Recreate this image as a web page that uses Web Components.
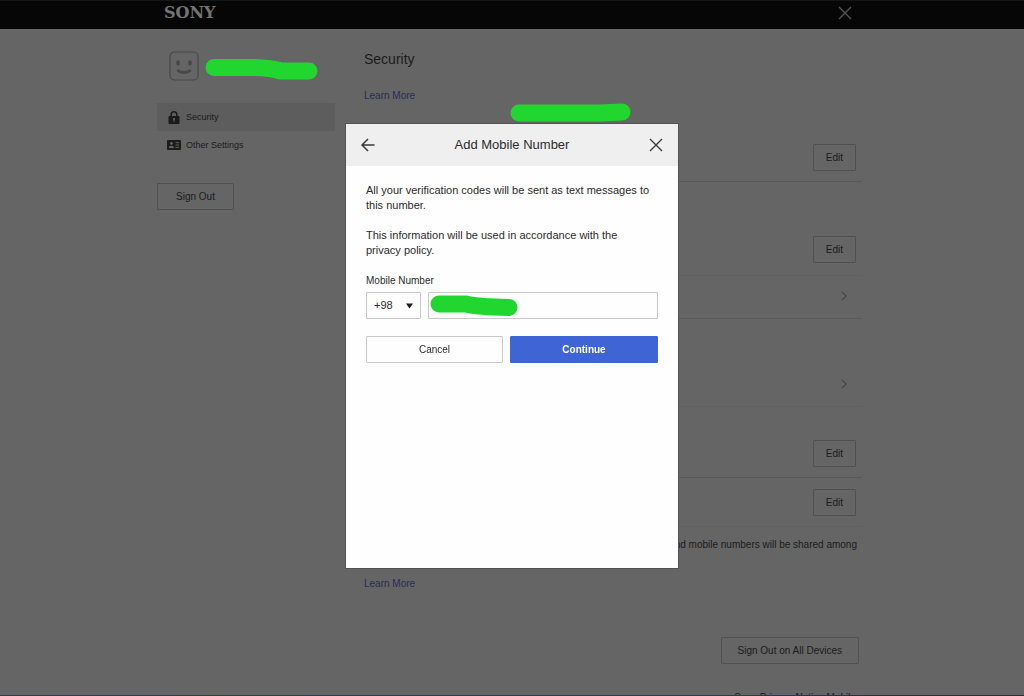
<!DOCTYPE html>
<html lang="en">
<head>
<meta charset="utf-8">
<meta name="viewport" content="width=device-width, initial-scale=1">
<title>Security - Account Management</title>
<style>
  html, body { margin: 0; height: 100%; }
  body {
    overflow: hidden;
    background: #656565;
    color: #1b1b1b;
    font: 10px/15px "Liberation Sans", Arial, sans-serif;
    --line: #5a5a5a;
    --outline: #505050;
    --mark: #20d62f;
  }
</style>
</head>
<body>
<account-page></account-page>
<script>
const define = (name, html, setup) => {
  const template = document.createElement('template');
  template.innerHTML = html;
  customElements.define(name, class extends HTMLElement {
    constructor() {
      super();
      this.attachShadow({ mode: 'open' }).append(template.content.cloneNode(true));
    }
    connectedCallback() { if (setup) setup(this, this.shadowRoot); }
  });
};

define('icon-glyph', `
  <style>
    :host { display: inline-flex; flex: none; }
    svg { display: block; fill: none; stroke: currentColor; }
  </style>`, (host, root) => {
  const shapes = {
    close: [14, 14, '<path d="M1 1 13 13M13 1 1 13" stroke-width="1.4"/>'],
    back: [14, 14, '<path d="M13.5 7H1.5M7 1 1 7l6 6" stroke-width="1.5"/>'],
    chevron: [6, 10, '<path d="M.7.7 5 5 .7 9.3" stroke-width="1.2"/>'],
    lock: [14, 13, '<path d="M4.2 6V3.6a2.8 2.8 0 0 1 5.6 0V6" stroke-width="1.6"/><rect x="1.500" y="5" width="11" height="8" rx="1" fill="currentColor" stroke="none"/><circle cx="7" cy="8" r="1.1" fill="#656565" stroke="none"/><path d="M7 8v3" stroke="#656565" stroke-width="1"/>'],
    card: [14, 10, '<rect width="14" height="10" rx="1" fill="currentColor" stroke="none"/><circle cx="4.4" cy="3.4" r="1.4" fill="#656565" stroke="none"/><path d="M1.8 8c0-3 5.2-3 5.2 0z" fill="#656565" stroke="none"/><path d="M8.5 2.7H12M8.5 5H12M8.5 7.3H12" stroke="#656565" stroke-width="1"/>'],
    face: [30, 30, '<rect x="1" y="1" width="28" height="28" rx="4.5" stroke-width="1.2"/><ellipse cx="9" cy="12" rx="1.9" ry="2.7" fill="currentColor" stroke="none"/><ellipse cx="21" cy="12" rx="1.9" ry="2.7" fill="currentColor" stroke="none"/><path d="M9.300 19.800q5.800 3.600 11.400 0" stroke-width="3" stroke-linecap="round"/>']
  };
  const [w, h, body] = shapes[host.getAttribute('name')];
  root.innerHTML += `<svg width="${w}" height="${h}" viewBox="0 0 ${w} ${h}" aria-hidden="true">${body}</svg>`;
});

define('marker-stroke', `
  <style>
    :host { display: block; flex: none; }
    svg { display: block; fill: none; stroke: var(--mark); stroke-width: 17; stroke-linecap: round; stroke-linejoin: round; }
  </style>`, (host, root) => {
  const w = host.getAttribute('width');
  const h = host.getAttribute('height') || 22;
  root.innerHTML += `<svg width="${w}" height="${h}" viewBox="0 0 ${w} ${h}" aria-hidden="true"><path d="${host.getAttribute('path')}"/></svg>`;
});

define('line-button', `
  <style>
    :host { display: inline-flex; }
    button {
      flex: 1; height: 27px; padding: 0 var(--pad, 12px);
      border: 1px solid var(--outline); border-radius: 1px;
      background: none; color: inherit; font: inherit; white-space: nowrap;
    }
    :host([primary]) button { background: #3e64d6; border-color: #3e64d6; color: #fff; font-weight: bold; }
  </style>
  <button type="button"><slot></slot></button>`);

define('top-bar', `
  <style>
    :host { display: block; background: #060606; border-top: 1px solid #151515; }
    .inner { display: flex; justify-content: space-between; align-items: center; max-width: 710px; height: 24px; padding-bottom: 4px; margin: 0 auto; }
    a { margin-left: 7px; color: #747474; font: bold 16px/20px "DejaVu Serif", serif; text-decoration: none; }
    button { display: flex; margin-right: 15px; padding: 0; border: 0; background: none; color: #555; }
  </style>
  <div class="inner">
    <a href="#">SONY</a>
    <button type="button" aria-label="Close"><icon-glyph name="close"></icon-glyph></button>
  </div>`);

define('side-link', `
  <style>
    :host { display: block; font-size: 9px; }
    a { display: flex; align-items: center; gap: 5px; height: 28px; padding-left: 10px; color: inherit; text-decoration: none; }
    :host([current]) a { background: #5d5d5d; }
  </style>
  <a href="#"><slot name="icon"></slot><slot></slot></a>`);

define('side-menu', `
  <style>
    :host { display: block; }
    .user { display: flex; align-items: center; gap: 6px; padding: 1px 0 22px 12px; color: #484848; }
    nav { margin-bottom: 24px; }
    line-button { --pad: 18px; }
  </style>
  <div class="user">
    <icon-glyph name="face"></icon-glyph>
    <marker-stroke width="114" height="30" path="M9 16.500H50Q66 17 76 20H104"></marker-stroke>
  </div>
  <nav aria-label="Account">
    <side-link current><icon-glyph slot="icon" name="lock"></icon-glyph>Security</side-link>
    <side-link><icon-glyph slot="icon" name="card"></icon-glyph>Other Settings</side-link>
  </nav>
  <line-button>Sign Out</line-button>`);

define('setting-row', `
  <style>
    :host { display: flex; justify-content: flex-end; align-items: flex-end; box-sizing: border-box; padding: 0 6px 10px 0; border-bottom: 1px solid var(--line); }
    :host([link]) { padding: 0 15px 17px 0; color: #474747; }
    :host([faint]) { border-color: #616161; }
    :host([size="s"]) { height: 43px; }
    :host([size="m"]) { height: 49px; }
    :host([size="ml"]) { height: 57px; }
    :host([size="l"]) { height: 71px; }
    :host([size="xl"]) { height: 94px; padding-bottom: 12px; }
    :host([size="link-l"]) { height: 88px; }
  </style>
  <slot></slot>`);

define('security-panel', `
  <style>
    :host { display: block; padding-right: 5px; }
    h1 { margin: 0; font-size: 14px; line-height: 18px; font-weight: normal; }
    a { color: #2b2b58; text-decoration: none; }
    .intro { margin: 20px 0 0; }
    .account { display: flex; justify-content: center; padding-right: 84px; }
    .note { margin: 10px 5px 0 0; text-align: right; }
    .more { margin: 24px 0 46px; }
    .everywhere { display: flex; justify-content: flex-end; padding-right: 3px; }
    .everywhere line-button { --pad: 16px; }
    .foot { margin: 26px 6px 0 0; text-align: right; }
  </style>
  <h1>Security</h1>
  <p class="intro"><a href="#">Learn More</a></p>
  <div class="account"><marker-stroke width="122" path="M9 10H90L112 9"></marker-stroke></div>
  <setting-row size="ml"><line-button>Edit</line-button></setting-row>
  <setting-row size="xl" faint><line-button>Edit</line-button></setting-row>
  <setting-row size="s" link><icon-glyph name="chevron"></icon-glyph></setting-row>
  <setting-row size="link-l" link faint><icon-glyph name="chevron"></icon-glyph></setting-row>
  <setting-row size="l"><line-button>Edit</line-button></setting-row>
  <setting-row size="m" faint><line-button>Edit</line-button></setting-row>
  <p class="note">and mobile numbers will be shared among</p>
  <p class="more"><a href="#">Learn More</a></p>
  <div class="everywhere"><line-button>Sign Out on All Devices</line-button></div>
  <p class="foot">Sony Privacy Notice Mobile</p>`);

define('modal-dialog', `
  <style>
    :host { position: fixed; inset: 0 0 4px; display: flex; align-items: center; justify-content: center; color: #2b2b2b; font-size: 11px; --outline: #c9c9cb; }
    section { width: 332px; min-height: 444px; background: #fefefe; outline: 1px solid #525252; }
    header { display: flex; align-items: center; justify-content: space-between; height: 42px; padding: 0 15px; background: #efefef; }
    h2 { margin: 0; font-size: 13px; line-height: 18px; font-weight: normal; }
    header button { display: flex; padding: 0; border: 0; background: none; color: #3a3a3a; }
    .body { padding: 17px 20px 20px; }
  </style>
  <section role="dialog" aria-labelledby="title">
    <header>
      <button type="button" aria-label="Back"><icon-glyph name="back"></icon-glyph></button>
      <h2 id="title"><slot name="title"></slot></h2>
      <button type="button" aria-label="Close"><icon-glyph name="close"></icon-glyph></button>
    </header>
    <div class="body"><slot></slot></div>
  </section>`);

define('mobile-form', `
  <style>
    :host { display: block; }
    p { margin: 0 0 15px; padding-right: 6px; }
    label { display: block; margin-bottom: 4px; font-size: 10px; }
    .row { display: grid; grid-template-columns: 55px 1fr; gap: 7px; margin-bottom: 17px; }
    .select, .number { display: grid; align-items: center; }
    .select > *, .number > * { grid-area: 1 / 1; }
    select, input { box-sizing: border-box; width: 100%; height: 27px; margin: 0; padding: 0 7px; border: 1px solid var(--outline); border-radius: 1px; background: #fefefe; color: inherit; font: inherit; appearance: none; }
    .select svg { justify-self: end; margin-right: 8px; pointer-events: none; }
    .number marker-stroke { margin-left: 2px; pointer-events: none; }
    .actions { display: grid; grid-template-columns: 137px 1fr; gap: 7px; font-size: 10px; }
  </style>
  <p>All your verification codes will be sent as text messages to this number.</p>
  <p>This information will be used in accordance with the privacy policy.</p>
  <label for="number">Mobile Number</label>
  <div class="row">
    <div class="select">
      <select aria-label="Country code"><option>+98</option></select>
      <svg width="7" height="6" viewBox="0 0 7 6" aria-hidden="true"><path d="M0 .5h7L3.500 5.500z" fill="#1b1b1b"/></svg>
    </div>
    <div class="number">
      <input id="number" type="tel">
      <marker-stroke width="90" path="M9 9H36Q48 12 79 12.500"></marker-stroke>
    </div>
  </div>
  <div class="actions">
    <line-button>Cancel</line-button>
    <line-button primary>Continue</line-button>
  </div>`);

define('account-page', `
  <style>
    :host { display: block; }
    main { display: grid; grid-template-columns: 178px 1fr; gap: 29px; max-width: 710px; margin: 0 auto; padding-top: 21px; }
    .edge { position: fixed; inset: auto 0 0; height: 1px; background: linear-gradient(90deg, #343a48, #263b6c 30%, #263b6c 70%, #303038 85%); }
  </style>
  <top-bar></top-bar>
  <main>
    <side-menu></side-menu>
    <security-panel></security-panel>
  </main>
  <modal-dialog>
    <span slot="title">Add Mobile Number</span>
    <mobile-form></mobile-form>
  </modal-dialog>
  <div class="edge"></div>`);
</script>
</body>
</html>
